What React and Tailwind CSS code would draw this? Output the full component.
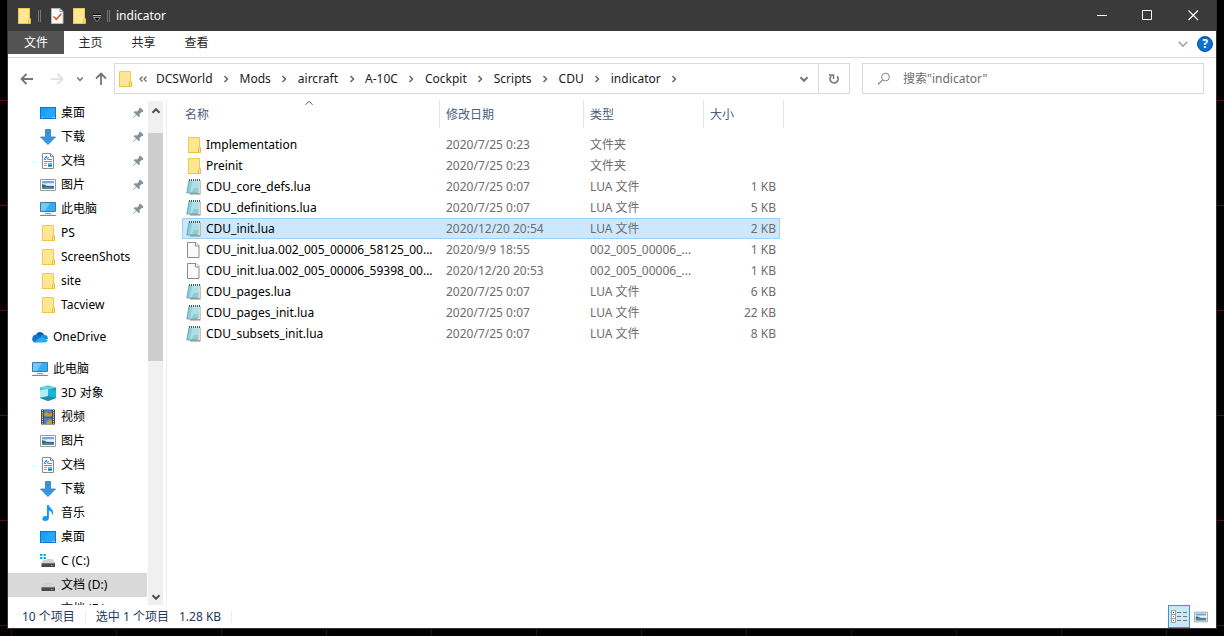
import React from 'react';

const FolderIcon = ({ className = 'h-4 w-4' }) => (
  <svg className={className} viewBox="0 0 16 16" fill="none">
    <path d="M2 .5h12v15H2z" fill="#ffe693" />
    <path d="M2.500 15.500V.5h11v9.700" stroke="#f0cb4f" />
    <path d="M2 15.500h10.500" stroke="#edc446" />
    <path d="M12.500 15.500v-3.800l1-1.400 1 .4v4.800z" fill="#ffe083" stroke="#e9bd3c" />
  </svg>
);

const DesktopIcon = () => (
  <svg className="h-4 w-4" viewBox="0 0 16 16">
    <path d="M0 2h16v12H0z" fill="#0a78d0" />
    <path d="M1 3h14v10H1z" fill="#1aa0fb" />
    <path d="M9 3h6v10H4z" fill="#26a8ff" />
    <path d="M2 12h1v1H2zM12 12h1v1h-1zM14 12h1v1h-1z" fill="#fff" />
  </svg>
);

const DownloadIcon = () => (
  <svg className="h-4 w-4" viewBox="0 0 16 16">
    <path d="M5.500.5h5v7.500h5L8 15.600.5 8h5z" fill="#3a93e0" stroke="#2a7fc9" strokeWidth="0.8" />
  </svg>
);

const DocumentIcon = () => (
  <svg className="h-4 w-4" viewBox="0 0 16 16" fill="none">
    <path d="M2.500.5h8l3 3v12h-11z" fill="#fff" stroke="#8a8a8a" />
    <path d="M10.500.5v3h3" stroke="#8a8a8a" />
    <path d="M4 6.500h2M8 4.500h1M8 6.500h4M4 8.500h8" stroke="#2f9bdc" />
    <path d="m4.500 6 2-3 1 3.500" stroke="#2079bd" />
    <path d="M4 10.500h3M4 12.500h3" stroke="#8fa6b5" />
    <path d="M8 10h4v3.500H8z" fill="#6fb1e0" />
    <path d="M8 12h4v1.500H8z" fill="#3d6a58" />
  </svg>
);

const PictureIcon = ({ className = 'h-4 w-4' }) => (
  <svg className={className} viewBox="0 0 16 16">
    <path d="M.5 2.500h15v11H.5z" fill="#fff" stroke="#9a9a9a" />
    <path d="M2 4h12v8H2z" fill="#a9d4f6" />
    <path d="M2 4h12v2H2z" fill="#6fa9e6" />
    <path d="M5 7.500 8 6.500h6v2H8z" fill="#e8f4fb" />
    <path d="M2 7.500c3 0 3 1.500 6 1.500h6v1H2z" fill="#37645b" />
    <path d="M2 10h12v2H2z" fill="#53829a" />
  </svg>
);

const ComputerIcon = () => (
  <svg className="h-4 w-4" viewBox="0 0 16 16">
    <path d="M.5 1.500h15v9H.5z" fill="#36acf5" stroke="#3d7ba5" />
    <path d="M1 2h9L5 10H1z" fill="#73c8ff" />
    <path d="M5 12h6v1H5z" fill="#8ba2b1" />
    <path d="M0 14h16v1H0z" fill="#738b9b" />
    <path d="M2 13.500h12v.5H2z" fill="#c2cdd4" />
  </svg>
);

const CloudIcon = () => (
  <svg className="h-4 w-4" viewBox="0 0 16 16">
    <path d="M4 6a4.400 4.400 0 0 1 8.200-.2L9 10 3 8z" fill="#0a5db4" />
    <path d="M3.500 5.800c2-.6 3.500.2 5 1.400L4 13.500H3C-.8 13-.8 6.500 3.500 5.800z" fill="#0f73cf" />
    <path d="M8 7.500c1-1.800 3-2.300 4.600-1.500 2.400.1 3.600 2 3.300 4L12 11z" fill="#1590df" />
    <path d="M2 12.800 9.300 8l6.400 3.300c-.5 1.500-1.500 2.200-3 2.200H4c-.8 0-1.500-.3-2-.7z" fill="#29a8ea" />
  </svg>
);

const CubeIcon = () => (
  <svg className="h-4 w-4" viewBox="0 0 16 16">
    <path d="M0 2.500 8 0l8 2.500-8 3z" fill="#62d3e3" />
    <path d="M0 2.500l8 2.500v11l-8-3z" fill="#35bfd4" />
    <path d="M16 2.500 8 5v11l8-3z" fill="#0a9cc4" />
    <path d="M0 5l8-1v8l-8 .5z" fill="#b4ecf2" />
    <path d="M8 4l8 1.500v7L8 12z" fill="#19b4d6" />
    <path d="M0 13l8-2 8 2-8 3z" fill="#1a8fa8" />
  </svg>
);

const VideoIcon = () => (
  <svg className="h-4 w-4" viewBox="0 0 16 16">
    <path d="M1 .5h14v15H1z" fill="#3b3b3b" />
    <path d="M4 1h8v6.500H4zM4 8.500h8V15H4z" fill="#3f7edb" />
    <path d="M4 4.500 7 3l2 2 3-1v3.500H4zM7 12l3-2 2 2v3H6z" fill="#bfa036" />
    <path d="M9 2h2v2H9z" fill="#e4553b" />
    <path d="M2.500 1v14M13.500 1v14" stroke="#f2f2f2" strokeWidth="1.200" strokeDasharray="1.200 1" />
  </svg>
);

const MusicIcon = () => (
  <svg className="h-4 w-4" viewBox="0 0 16 16">
    <path d="M7 0h1.800c.2 3 4.600 3.600 4.400 8.200-.1 1-.5 1.800-1.100 2.300.5-2.600-.8-4.200-3.200-4.900V13c0 1.800-1.700 3-3.600 3-1.700 0-3-.8-3-2.200 0-1.800 2.500-3.200 4.700-2.500z" fill="#109bf8" />
  </svg>
);

const DriveIcon = ({ system }) => (
  <svg className="h-4 w-4" viewBox="0 0 16 16">
    <path d="M3.500 6h9L15 10H1.500z" fill="#d2d2d2" />
    <path d="M1.500 10H15v4H1.500z" fill="#4b4b4b" />
    <path d="M2 10h12.500v1H2z" fill="#777" />
    <path d="M11 12h1.500v1H11z" fill="#4fe06a" />
    {system && (
      <>
        <path d="M0 0h7v7H0z" fill="#fff" />
        <path d="M0 1h2.500v2H0zM3.500 1H6v2H3.500zM0 4h2.500v2H0zM3.500 4H6v2H3.500z" fill="#0bb4e8" />
      </>
    )}
  </svg>
);

const LuaIcon = () => (
  <svg className="h-4 w-4" viewBox="0 0 16 16">
    <path d="M13 1.500h1.500V15.500H4V14h8z" fill="#9b8b66" />
    <path d="M13 2h.8v12.300H3.500V13.500h8.800z" fill="#f1f1ea" />
    <path d="M3 1.500h10.500L11.800 14H.8z" fill="#b5e3ea" />
    <path d="M3 1.500h3.500L4 14H.8z" fill="#8fcdd9" />
    <path d="M8 9h4.400l-.6 5H5z" fill="#8ccfdb" />
    <path d="M2.900 4h10M2.500 6h10M2.200 8h10M1.800 10h10M1.400 12h10" stroke="#8cc6d3" strokeWidth="0.300" />
    <path d="M3 1h11" stroke="#3d5961" strokeWidth="2" strokeDasharray="1 1" />
    <path d="M3 1.500 .8 14h11" stroke="#5b9eac" strokeWidth="0.800" fill="none" />
  </svg>
);

const FileIcon = () => (
  <svg className="h-4 w-4" viewBox="0 0 16 16">
    <path d="M1.500.5h8.500l3 3v12H1.500z" fill="#f9f9f9" stroke="#8b8b8b" />
    <path d="M9.500.5v3.500H13" fill="#fff" stroke="#8b8b8b" />
  </svg>
);

const PinIcon = () => (
  <svg className="h-3 w-3" viewBox="0 0 12 12">
    <path d="M7 1.200 8.200.5 11.500 3.800 10.800 5 9.600 5 7.600 7.200 7.800 9.400 6.800 10.300 4.500 8 .8 11.500.5 11.200 4 7.500 1.700 5.200 2.700 4.200 5 4.400 7 2.400z" fill="#84929c" />
  </svg>
);

const Chevron = ({ d, className, width = 1.5 }) => (
  <svg className={className} viewBox="0 0 10 10" fill="none" stroke="currentColor" strokeWidth={width}>
    <path d={d} />
  </svg>
);

const down = 'M1.500 3.200 5 6.800l3.500-3.600';
const up = 'M1.500 6.800 5 3.200l3.500 3.600';
const right = 'M3.500 2 6.500 5l-3 3';

const tabs = ['主页', '共享', '查看'];
const crumbs = ['DCSWorld', 'Mods', 'aircraft', 'A-10C', 'Cockpit', 'Scripts', 'CDU', 'indicator'];

const quickAccess = [
  { name: '桌面', icon: <DesktopIcon />, pinned: true },
  { name: '下载', icon: <DownloadIcon />, pinned: true },
  { name: '文档', icon: <DocumentIcon />, pinned: true },
  { name: '图片', icon: <PictureIcon />, pinned: true },
  { name: '此电脑', icon: <ComputerIcon />, pinned: true },
  { name: 'PS', icon: <FolderIcon /> },
  { name: 'ScreenShots', icon: <FolderIcon /> },
  { name: 'site', icon: <FolderIcon /> },
  { name: 'Tacview', icon: <FolderIcon /> },
];

const computer = [
  { name: '3D 对象', icon: <CubeIcon /> },
  { name: '视频', icon: <VideoIcon /> },
  { name: '图片', icon: <PictureIcon /> },
  { name: '文档', icon: <DocumentIcon /> },
  { name: '下载', icon: <DownloadIcon /> },
  { name: '音乐', icon: <MusicIcon /> },
  { name: '桌面', icon: <DesktopIcon /> },
  { name: 'C (C:)', icon: <DriveIcon system /> },
  { name: '文档 (D:)', icon: <DriveIcon />, selected: true },
  { name: '文档 (E:)', icon: <DriveIcon /> },
];

const files = [
  { name: 'Implementation', date: '2020/7/25 0:23', type: '文件夹', size: '', icon: <FolderIcon /> },
  { name: 'Preinit', date: '2020/7/25 0:23', type: '文件夹', size: '', icon: <FolderIcon /> },
  { name: 'CDU_core_defs.lua', date: '2020/7/25 0:07', type: 'LUA 文件', size: '1 KB', icon: <LuaIcon /> },
  { name: 'CDU_definitions.lua', date: '2020/7/25 0:07', type: 'LUA 文件', size: '5 KB', icon: <LuaIcon /> },
  { name: 'CDU_init.lua', date: '2020/12/20 20:54', type: 'LUA 文件', size: '2 KB', icon: <LuaIcon />, selected: true },
  { name: 'CDU_init.lua.002_005_00006_58125_00...', date: '2020/9/9 18:55', type: '002_005_00006_...', size: '1 KB', icon: <FileIcon /> },
  { name: 'CDU_init.lua.002_005_00006_59398_00...', date: '2020/12/20 20:53', type: '002_005_00006_...', size: '1 KB', icon: <FileIcon /> },
  { name: 'CDU_pages.lua', date: '2020/7/25 0:07', type: 'LUA 文件', size: '6 KB', icon: <LuaIcon /> },
  { name: 'CDU_pages_init.lua', date: '2020/7/25 0:07', type: 'LUA 文件', size: '22 KB', icon: <LuaIcon /> },
  { name: 'CDU_subsets_init.lua', date: '2020/7/25 0:07', type: 'LUA 文件', size: '8 KB', icon: <LuaIcon /> },
];

const TreeItem = ({ item, root }) => (
  <li>
    <a
      href="#"
      className={`flex h-6 items-center gap-[5px] pr-[3px] text-black ${root ? 'pl-6' : 'pl-8'} ${item.selected ? 'bg-[#d9d9d9]' : ''}`}
    >
      {item.icon}
      <span className="flex-1 whitespace-nowrap">{item.name}</span>
      {item.pinned && <PinIcon />}
    </a>
  </li>
);

const TitleBar = () => (
  <header className="flex h-[31px] shrink-0 items-center bg-[#3a3a3a] text-white">
    <div className="flex flex-1 items-center pl-2">
      <FolderIcon />
      <span className="ml-1.5 h-3 w-[3px] border-x border-[#777]" />
      <button className="ml-2" aria-label="属性">
        <svg className="h-4 w-4" viewBox="0 0 16 16" fill="none">
          <path d="M2.500.5H11l3 3v12H2.500z" fill="#fafafa" stroke="#b9b9b9" />
          <path d="M11 .5v3h3" stroke="#999" />
          <path d="m4.500 8.500 2.800 2.800 5-5.500" stroke="#e2571f" strokeWidth="1.600" />
        </svg>
      </button>
      <button className="ml-1.5" aria-label="新建文件夹"><FolderIcon /></button>
      <button className="ml-1.5 pt-1" aria-label="自定义快速访问工具栏">
        <svg className="h-2 w-2" viewBox="0 0 8 8">
          <path d="M0 .5h8" stroke="#000" />
          <path d="M0 1.500h8" stroke="#ccc" />
          <path d="M.5 3.500h7L4 7.500z" fill="#000" stroke="#bbb" strokeWidth="0.700" />
        </svg>
      </button>
      <span className="ml-1.5 h-3 w-[3px] border-x border-[#777]" />
      <h1 className="ml-1.5">indicator</h1>
    </div>
    <button className="flex h-full w-[46px] items-center justify-center" aria-label="最小化">
      <svg className="h-[11px] w-[11px]" viewBox="0 0 11 11"><path d="M1 5.500h10" stroke="#fff" /></svg>
    </button>
    <button className="flex h-full w-[46px] items-center justify-center" aria-label="最大化">
      <svg className="h-[11px] w-[11px]" viewBox="0 0 11 11"><path d="M.5.5h9v9h-9z" fill="none" stroke="#fff" /></svg>
    </button>
    <button className="flex h-full w-[46px] items-center justify-center" aria-label="关闭">
      <svg className="h-[11px] w-[11px]" viewBox="0 0 11 11"><path d="m.5.5 9.500 9.500M10 .5.5 10" stroke="#fff" strokeWidth="1.200" /></svg>
    </button>
  </header>
);

const Ribbon = () => (
  <nav className="flex h-[27px] shrink-0 items-start border-b border-[#dadbdc] text-[#262626]">
    <button className="h-[23px] w-14 bg-[#535353] pt-px text-white">文件</button>
    {tabs.map((tab) => (
      <button key={tab} className="h-[23px] w-[53px] pt-px">{tab}</button>
    ))}
    <div className="ml-auto flex h-full items-center gap-2 pr-[3px]">
      <button className="text-[#9a9a9a]" aria-label="展开功能区">
        <Chevron d={down} className="h-3 w-3" width={1.2} />
      </button>
      <button className="flex h-4 w-4 items-center justify-center rounded-full border border-[#104f91] bg-[#0b6fd3] font-bold text-white">?</button>
    </div>
  </nav>
);

const AddressBar = () => (
  <div className="flex shrink-0 items-center px-3 pt-[5px] pb-1.5">
    <div className="flex w-[94px] shrink-0 items-center text-[#757575]">
      <button aria-label="后退">
        <svg className="h-3.5 w-3.5" viewBox="0 0 14 14" fill="none" stroke="currentColor" strokeWidth="1.800"><path d="M13 7H2M6.500 2l-5 5 5 5" /></svg>
      </button>
      <button className="ml-4 text-[#d9d9d9]" aria-label="前进">
        <svg className="h-3.5 w-3.5" viewBox="0 0 14 14" fill="none" stroke="currentColor" strokeWidth="1.500"><path d="M1 7h11M7.500 2l5 5-5 5" /></svg>
      </button>
      <button className="ml-3" aria-label="最近的位置"><Chevron d={down} className="h-2 w-2" width={2} /></button>
      <button className="ml-2.5" aria-label="上移">
        <svg className="h-3.5 w-3.5" viewBox="0 0 14 14" fill="none" stroke="currentColor" strokeWidth="1.800"><path d="M7 13V1.500M2 6.500l5-5 5 5" /></svg>
      </button>
    </div>
    <div className="flex h-[31px] min-w-0 flex-1 items-center border border-[#d9d9d9]">
      <div className="ml-0.5"><FolderIcon /></div>
      <button className="ml-[5px] text-[#666]" aria-label="上级目录">
        <svg className="h-2.5 w-2.5" viewBox="0 0 10 10" fill="none" stroke="currentColor" strokeWidth="1.200"><path d="M4.500 2.500 2 5l2.500 2.500M8.500 2.500 6 5l2.500 2.500" /></svg>
      </button>
      <div className="ml-2 flex flex-1 items-center text-[#1b1b1b]">
        {crumbs.map((crumb) => (
          <React.Fragment key={crumb}>
            <a href="#">{crumb}</a>
            <span className="flex w-[27px] justify-center text-[#666]">
              <Chevron d={right} className="h-2.5 w-2.5" />
            </span>
          </React.Fragment>
        ))}
      </div>
      <button className="flex w-7 justify-center text-[#757575]" aria-label="以前的位置">
        <Chevron d={down} className="h-2.5 w-2.5" width={2} />
      </button>
      <button className="flex h-full w-[31px] items-center justify-center border-l border-[#d9d9d9] text-[#757575]" aria-label="刷新">
        <svg className="h-3 w-3" viewBox="0 0 12 12" fill="none" stroke="currentColor" strokeWidth="1.700">
          <path d="M3.200 3.200a4 4 0 1 0 6 .2" />
          <path d="M1 1.900h4.500V6" strokeWidth="1.500" />
        </svg>
      </button>
    </div>
    <label className="ml-3 flex h-[31px] w-[342px] items-center border border-[#d9d9d9] pl-3.5">
      <svg className="h-3.5 w-3.5 shrink-0" viewBox="0 0 14 14" fill="none" stroke="#7e8694">
        <circle cx="8.500" cy="5" r="3.900" />
        <path d="M5.700 7.800 1 12.500" strokeWidth="1.200" />
      </svg>
      <input
        type="search"
        aria-label="搜索"
        placeholder={'搜索"indicator"'}
        className="ml-3 min-w-0 flex-1 text-black outline-none placeholder:text-[#6d6d6d]"
      />
    </label>
  </div>
);

const Sidebar = () => (
  <aside className="flex w-[159px] shrink-0 border-r border-[#f0f0f0]">
    <nav className="w-[139px] shrink-0 overflow-hidden pt-px">
      <ul>
        {quickAccess.map((item) => <TreeItem key={item.name} item={item} />)}
      </ul>
      <ul className="my-2">
        <TreeItem root item={{ name: 'OneDrive', icon: <CloudIcon /> }} />
      </ul>
      <ul>
        <TreeItem root item={{ name: '此电脑', icon: <ComputerIcon /> }} />
        {computer.map((item) => <TreeItem key={item.name} item={item} />)}
      </ul>
    </nav>
    <div className="mt-px ml-px flex w-[15px] flex-col items-center bg-[#f0f0f0] text-[#505050]">
      <button className="flex h-5 items-center" aria-label="向上滚动"><Chevron d={up} className="h-2.5 w-2.5" width={2} /></button>
      <div className="mt-3 h-[228px] w-full bg-[#cdcdcd]" />
      <button className="mt-auto flex h-4 items-center" aria-label="向下滚动"><Chevron d={down} className="h-2.5 w-2.5" width={2} /></button>
    </div>
  </aside>
);

const FileTable = () => (
  <main className="min-w-0 flex-1 overflow-hidden pl-[15px]">
    <table className="w-[602px] table-fixed border-separate border-spacing-0">
      <colgroup>
        <col className="w-[258px]" />
        <col className="w-36" />
        <col className="w-[120px]" />
        <col className="w-[76px]" />
        <col className="w-1" />
      </colgroup>
      <thead>
        <tr className="h-7 text-left text-[#4c607a]">
          <th className="relative border-r border-[#e5e5e5] pt-0.5 pl-[3px] font-normal">
            名称
            <Chevron d={up} className="absolute -top-0.5 left-[122px] h-2.5 w-2.5" width={1} />
          </th>
          <th className="border-r border-[#e5e5e5] pt-0.5 pl-1.5 font-normal">修改日期</th>
          <th className="border-r border-[#e5e5e5] pt-0.5 pl-1.5 font-normal">类型</th>
          <th className="pt-0.5 pl-1.5 font-normal">大小</th>
          <th className="border-r border-[#e5e5e5]" />
        </tr>
      </thead>
      <tbody>
        <tr className="h-1.5" />
        {files.map((file) => {
          const cell = file.selected ? 'border-y border-[#99d1ff] bg-[#cce8ff]' : '';
          return (
            <tr key={file.name} className="h-[21px] whitespace-nowrap text-[#6d6d6d]">
              <td className={`${cell} p-0 text-black ${file.selected ? 'border-l pl-[3px]' : 'pl-1'}`}>
                <div className="flex items-center gap-1">
                  {file.icon}
                  <span>{file.name}</span>
                </div>
              </td>
              <td className={`${cell} p-0 pl-1.5`}>{file.date}</td>
              <td className={`${cell} p-0 pl-1.5`}>{file.type}</td>
              <td className={`${cell} p-0 text-right ${file.selected ? 'border-r pr-[3px]' : 'pr-1'}`}>{file.size}</td>
            </tr>
          );
        })}
      </tbody>
    </table>
  </main>
);

const StatusBar = () => (
  <footer className="flex h-[23px] shrink-0 items-center pl-3.5 text-[#1e395b]">
    <span>10 个项目</span>
    <span className="mx-2.5 h-3 w-px bg-[#ececec]" />
    <span>选中 1 个项目</span>
    <span className="ml-2.5">1.28 KB</span>
    <span className="ml-2.5 h-3 w-px bg-[#ececec]" />
    <div className="ml-auto flex items-center gap-1 pr-2">
      <button className="flex h-[23px] w-[22px] items-center justify-center border border-[#2a9fd8] bg-[#cce8f6]" aria-label="详细信息">
        <svg className="h-4 w-4" viewBox="0 0 16 16" fill="none">
          <path d="M.5 1.500h4v12h-4zM.5 5.500h4M.5 9.500h4" fill="#fff" stroke="#9a9a9a" />
          <path d="M2 3h1v1H2z" fill="#444" />
          <path d="M2 7h1v1H2z" fill="#2b7fe0" />
          <path d="M2 11h1v1H2z" fill="#d22" />
          <path d="M6 3.500h4M12 3.500h4M6 7.500h4M12 7.500h4M6 11.500h4M12 11.500h4" stroke="#777" />
        </svg>
      </button>
      <button aria-label="大缩略图"><PictureIcon className="h-3.5 w-3.5" /></button>
    </div>
  </footer>
);

const App = () => {
  return (
    <div
      lang="zh-CN"
      className="flex h-screen flex-col bg-black bg-[repeating-linear-gradient(to_bottom,transparent_0_100px,#5a0d12_100px_101px,transparent_101px_105px),repeating-linear-gradient(to_right,transparent_0_11px,#3d0a0d_11px_12px,transparent_12px_105px)] px-[7px] pb-[7px] font-['Noto_Sans','Noto_Sans_CJK_SC',sans-serif] text-[12px] leading-4"
    >
      <div className="flex min-h-0 flex-1 flex-col border-x border-b border-[#333] bg-white">
        <TitleBar />
        <Ribbon />
        <AddressBar />
        <div className="flex min-h-0 flex-1">
          <Sidebar />
          <FileTable />
        </div>
        <StatusBar />
      </div>
    </div>
  );
};

export default App;
